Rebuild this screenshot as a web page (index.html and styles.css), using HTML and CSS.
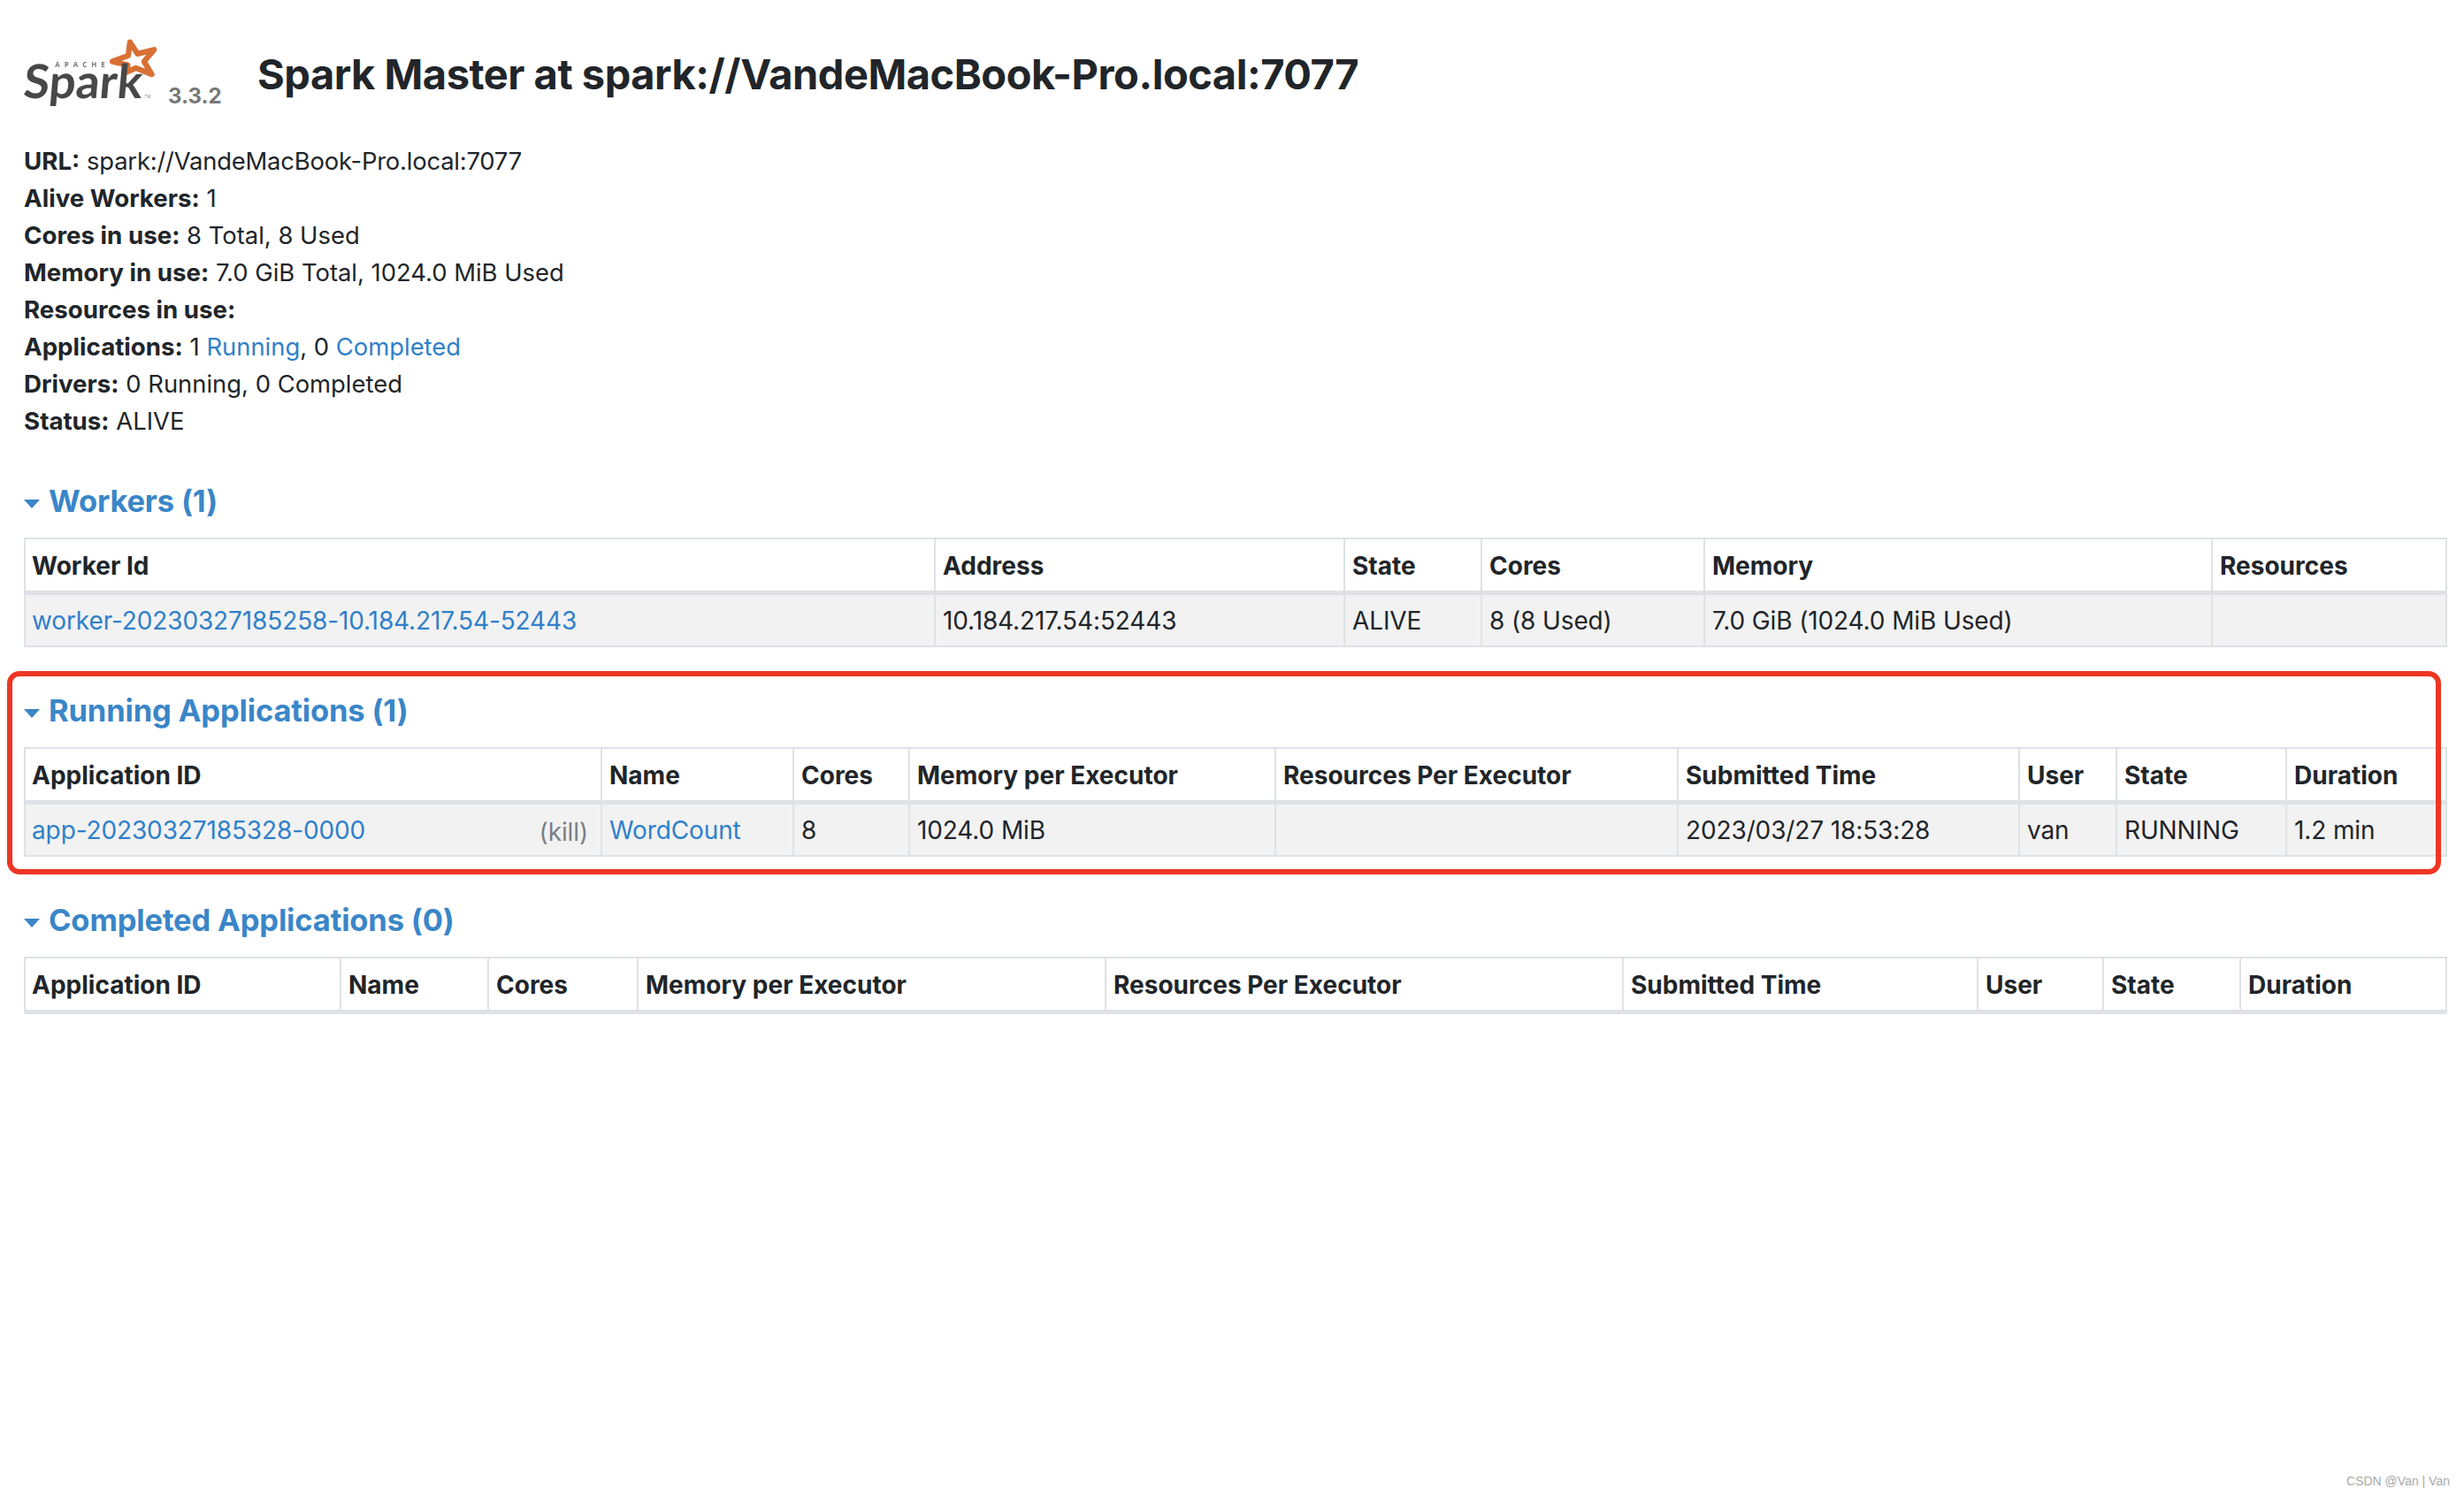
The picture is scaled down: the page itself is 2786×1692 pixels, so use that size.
FILE: index.html
```html
<!DOCTYPE html>
<html lang="en">
<head>
<meta charset="utf-8">
<title>Spark Master at spark://VandeMacBook-Pro.local:7077</title>
<link rel="stylesheet" href="styles.css">
</head>
<body>
<div class="page">
  <header class="top">
    <div class="brand">
      <svg class="logo" viewBox="0 0 470 235" aria-label="Apache Spark logo">
        <polygon class="star" points="360,14 386,54 442,40 408,80 434,124 380,102 350,116 352,92 300,80 354,60"/>
        <text class="apache" x="105" y="100" textLength="170" lengthAdjust="spacing">APACHE</text>
        <text class="wordmark" x="12" y="205" textLength="404" lengthAdjust="spacingAndGlyphs">Spark</text>
        <text class="tm" x="410" y="204">TM</text>
      </svg>
      <span class="version">3.3.2</span>
    </div>
    <h1 class="title">Spark Master at spark://VandeMacBook-Pro.local:7077</h1>
  </header>

  <ul class="facts">
    <li><strong>URL:</strong> <span class="url">spark://VandeMacBook-Pro.local:7077</span></li>
    <li><strong>Alive Workers:</strong> 1</li>
    <li><strong>Cores in use:</strong> 8 Total, 8 Used</li>
    <li><strong>Memory in use:</strong> 7.0 GiB Total, 1024.0 MiB Used</li>
    <li><strong>Resources in use:</strong></li>
    <li><strong>Applications:</strong> 1 <a href="#running">Running</a>, 0 <a href="#completed">Completed</a></li>
    <li><strong>Drivers:</strong> 0 Running, 0 Completed</li>
    <li><strong>Status:</strong> ALIVE</li>
  </ul>

  <section class="block">
    <h2 class="section-title"><span class="arrow"></span>Workers (1)</h2>
    <table class="grid">
      <colgroup><col class="w1"><col class="w2"><col class="w3"><col class="w4"><col class="w5"><col class="w6"></colgroup>
      <thead><tr><th>Worker Id</th><th>Address</th><th>State</th><th>Cores</th><th>Memory</th><th>Resources</th></tr></thead>
      <tbody><tr><td><a href="#w">worker-20230327185258-10.184.217.54-52443</a></td><td>10.184.217.54:52443</td><td>ALIVE</td><td>8 (8 Used)</td><td>7.0 GiB (1024.0 MiB Used)</td><td></td></tr></tbody>
    </table>
  </section>

  <section class="block highlighted" id="running">
    <h2 class="section-title"><span class="arrow"></span>Running Applications (1)</h2>
    <table class="grid">
      <colgroup><col class="r1"><col class="r2"><col class="r3"><col class="r4"><col class="r5"><col class="r6"><col class="r7"><col class="r8"><col class="r9"></colgroup>
      <thead><tr><th>Application ID</th><th>Name</th><th>Cores</th><th>Memory per Executor</th><th>Resources Per Executor</th><th>Submitted Time</th><th>User</th><th>State</th><th>Duration</th></tr></thead>
      <tbody><tr><td class="app-cell"><a href="#a">app-20230327185328-0000</a><span class="kill">(kill)</span></td><td><a href="#n">WordCount</a></td><td>8</td><td>1024.0 MiB</td><td></td><td>2023/03/27 18:53:28</td><td>van</td><td>RUNNING</td><td>1.2 min</td></tr></tbody>
    </table>
    <div class="redbox"></div>
  </section>

  <section class="block" id="completed">
    <h2 class="section-title"><span class="arrow"></span>Completed Applications (0)</h2>
    <table class="grid">
      <colgroup><col class="c1"><col class="c2"><col class="c3"><col class="c4"><col class="c5"><col class="c6"><col class="c7"><col class="c8"><col class="c9"></colgroup>
      <thead><tr><th>Application ID</th><th>Name</th><th>Cores</th><th>Memory per Executor</th><th>Resources Per Executor</th><th>Submitted Time</th><th>User</th><th>State</th><th>Duration</th></tr></thead>
    </table>
  </section>
</div>
<div class="watermark">CSDN @Van | Van</div>
</body>
</html>
```
FILE: styles.css
```css
* { box-sizing: border-box; }
html, body { margin: 0; padding: 0; background: #fff; }
body {
  font-family: Inter, "Liberation Sans", sans-serif;
  font-size: 28px;
  line-height: 42px;
  color: #212529;
  height: 1692px;
  overflow: hidden;
  position: relative;
}
a { color: #2f80c9; text-decoration: none; }
.page { padding: 0 21px 0 27px; }

.top { display: flex; align-items: flex-start; height: 161px; padding-top: 43px; }
.brand { display: flex; align-items: flex-start; width: 264px; flex: none; }
.logo { width: 157px; height: 78px; flex: none; overflow: visible; filter: blur(0.5px); }
.star { fill: #fff; stroke: #d97034; stroke-width: 19; stroke-linejoin: round; }
.apache { font-family: "Open Sans", sans-serif; font-weight: 700; font-size: 24px; fill: #777; }
.wordmark { font-family: Lato, sans-serif; font-weight: 700; font-size: 160px; fill: #484848; transform: skewX(-5deg); }
.tm { font-family: "Liberation Sans", sans-serif; font-size: 14px; fill: #888; }
.version { font-size: 24px; font-weight: 700; color: #777; line-height: 30px; margin: 51px 0 0 6px; }
.title { margin: 11px 0 0; font-size: 47px; line-height: 60px; font-weight: 700; letter-spacing: -0.48px; }

.facts { list-style: none; margin: 0 0 45px; padding: 0; font-size: 27.4px; }
.facts strong { font-size: 27.7px; font-weight: 700; }
.url { letter-spacing: -0.2px; }

.block { position: relative; margin-bottom: 47px; }
.section-title {
  margin: 0 0 16px;
  font-size: 34.5px;
  line-height: 50px;
  font-weight: 700;
  letter-spacing: -0.15px;
  color: #3a86c8;
  display: flex;
  align-items: center;
}
.arrow {
  width: 0; height: 0; flex: none;
  border-left: 9px solid transparent;
  border-right: 9px solid transparent;
  border-top: 10px solid #3a86c8;
  margin: 6px 10px 0 0;
}

.grid { width: 100%; table-layout: fixed; border-collapse: collapse; border: 2px solid #dee2e6; }
.grid th, .grid td { border: 2px solid #dee2e6; padding: 2px 8px 0; text-align: left; white-space: nowrap; overflow: hidden; }
.grid th:first-child, .grid td:first-child { padding-left: 7px; }
.grid th { height: 61px; font-weight: 700; border-bottom-width: 5px; }
.grid td { height: 61px; background: #f2f2f2; letter-spacing: -0.12px; }
.app-cell { position: relative; }
.kill { position: absolute; right: 14px; top: 10px; color: #7b7f83; }

.w1 { width: 1029px; } .w2 { width: 463px; } .w3 { width: 155px; } .w4 { width: 252px; } .w5 { width: 574px; } .w6 { width: 265px; }
.r1 { width: 652px; } .r2 { width: 217px; } .r3 { width: 131px; } .r4 { width: 414px; } .r5 { width: 455px; } .r6 { width: 386px; } .r7 { width: 110px; } .r8 { width: 192px; } .r9 { width: 181px; }
.c1 { width: 357px; } .c2 { width: 167px; } .c3 { width: 169px; } .c4 { width: 529px; } .c5 { width: 585px; } .c6 { width: 401px; } .c7 { width: 142px; } .c8 { width: 155px; } .c9 { width: 233px; }

.redbox {
  position: absolute;
  left: -19px; right: 5px; top: -20px; bottom: -20px;
  border: 6px solid #ee3524;
  border-radius: 14px;
  pointer-events: none;
}
.watermark { position: absolute; right: 16px; bottom: 9px; font-family: "Liberation Sans", sans-serif; font-size: 14px; line-height: 16px; color: #a8a8a8; }
```
